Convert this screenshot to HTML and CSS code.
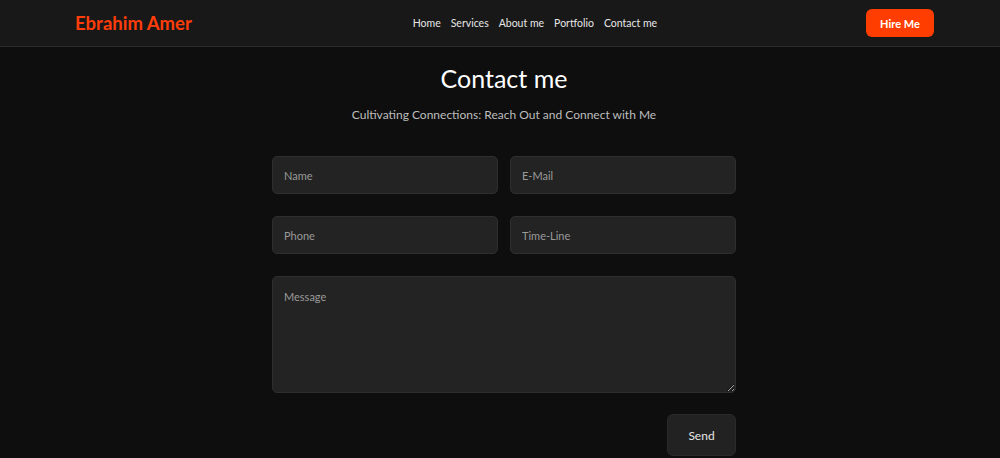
FILE: index.html
```html
<!DOCTYPE html>
<html lang="en">
  <head>
    <meta charset="UTF-8" />
    <meta name="viewport" content="width=device-width, initial-scale=1.0" />
    <title>Ebrahim Amer - Contact</title>
    <link rel="stylesheet" href="styles.css">
  </head>
  <body>
    <header class="header">
      <a class="logo" href="#">Ebrahim Amer</a>
      <nav class="nav">
        <a href="#">Home</a>
        <a href="#">Services</a>
        <a href="#">About me</a>
        <a href="#">Portfolio</a>
        <a href="#">Contact me</a>
      </nav>
      <button class="hire-btn">Hire Me</button>
    </header>

    <!-- Contact section -->
    <section class="contact">
      <h1>Contact me</h1>
      <p class="subtitle">Cultivating Connections: Reach Out and Connect with Me</p>

      <form class="contact-form">
        <div class="row">
          <input type="text" placeholder="Name" />
          <input type="email" placeholder="E-Mail" />
        </div>
        <div class="row">
          <input type="text" placeholder="Phone" />
          <input type="text" placeholder="Time-Line" />
        </div>
        <textarea placeholder="Message"></textarea>
        <div class="actions">
          <button type="button" class="send-btn">Send</button>
        </div>
      </form>
    </section>
  </body>
</html>
```

FILE: styles.css
```css
body {
  font-family: Lato, "Noto Sans", sans-serif;
  background-color: #0e0e0e;
  color: #fff;
  margin: 0;
  padding: 0;
}

.header {
  height: 47px;
  background-color: #181818;
  border-bottom: 1px solid #2a2a2a;
  display: flex;
  align-items: center;
  justify-content: space-between;
  padding: 0 66px 0 75px;
  box-sizing: border-box;
}

.logo {
  color: #ff3d0a;
  font-size: 18.5px;
  font-weight: bold;
  text-decoration: none;
}

.nav {
  display: flex;
  gap: 10px;
  margin-left: 12px;
}

.nav a {
  color: #e6e6e6;
  font-size: 10.5px;
  text-decoration: none;
}

.hire-btn {
  background-color: #ff3d00;
  color: #fff;
  font-family: inherit;
  font-size: 11px;
  font-weight: bold;
  border: none;
  border-radius: 6px;
  width: 68px;
  height: 28px;
  cursor: pointer;
}

.contact {
  width: 464px;
  margin-left: calc(50% - 228px);
  padding-top: 15px;
  text-align: center;
}

.contact h1 {
  font-size: 25px;
  font-weight: normal;
  margin: 0;
  line-height: 32px;
}

.subtitle {
  font-size: 12px;
  color: #bdbdbd;
  margin: 13px 0 34px;
}

.contact-form {
  display: flex;
  flex-direction: column;
  gap: 22px;
}

.row {
  display: flex;
  gap: 12px;
}

.contact-form input,
.contact-form textarea {
  flex: 1;
  background-color: #232323;
  border: 1px solid #2e2e2e;
  border-radius: 5px;
  color: #ddd;
  font-family: inherit;
  font-size: 11px;
  padding: 0 11px;
  height: 38px;
  box-sizing: border-box;
  outline: none;
}

.contact-form textarea {
  flex: none;
  height: 117px;
  padding-top: 13px;
  resize: vertical;
}

.contact-form ::placeholder {
  color: #9a9a9a;
}

.actions {
  display: flex;
  justify-content: flex-end;
  margin-top: -1px;
}

.send-btn {
  background-color: #222;
  color: #e6e6e6;
  font-family: inherit;
  font-size: 12px;
  border: 1px solid #2a2a2a;
  border-radius: 6px;
  width: 69px;
  height: 42px;
  cursor: pointer;
}
```
